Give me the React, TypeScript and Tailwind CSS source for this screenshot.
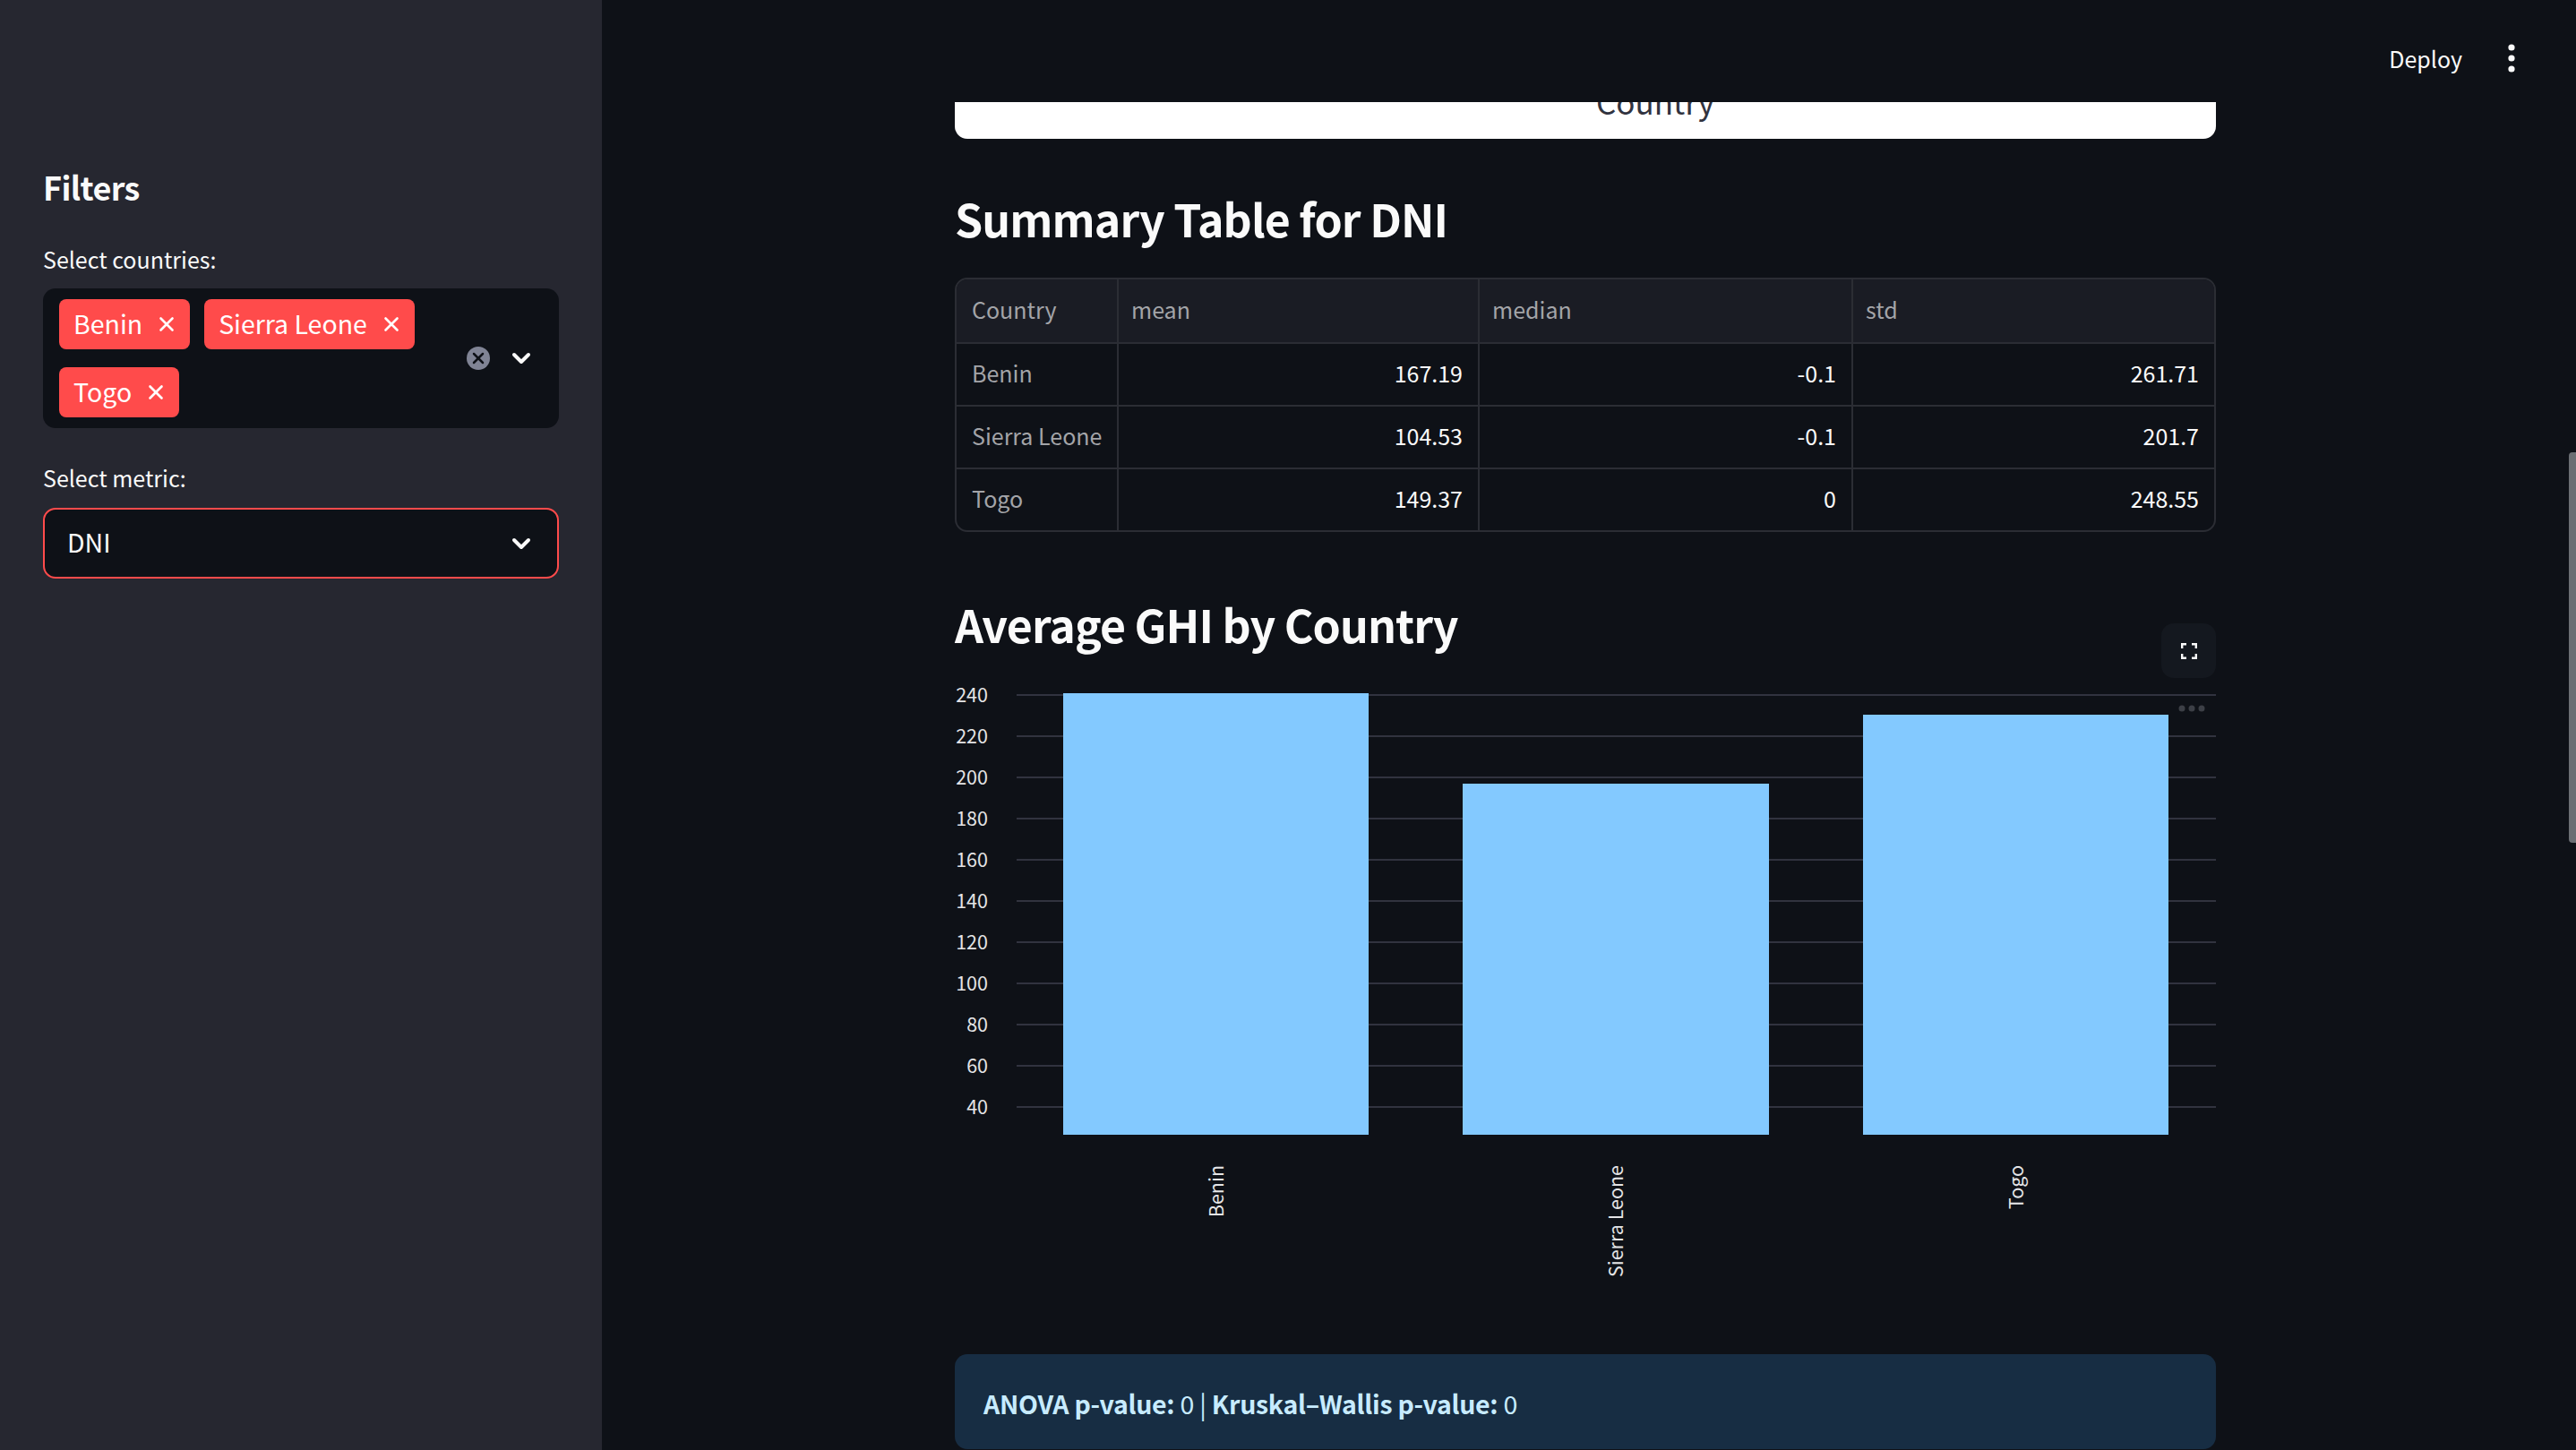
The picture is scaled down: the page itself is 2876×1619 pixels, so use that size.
import React from 'react';
import { ChevronDown, X } from 'lucide-react';

const rows = [
  { country: 'Benin', mean: '167.19', median: '-0.1', std: '261.71' },
  { country: 'Sierra Leone', mean: '104.53', median: '-0.1', std: '201.7' },
  { country: 'Togo', mean: '149.37', median: '0', std: '248.55' },
];

const ticks = [240, 220, 200, 180, 160, 140, 120, 100, 80, 60, 40];

const bars = [
  { name: 'Benin', x: 121, w: 341, top: 42 },
  { name: 'Sierra Leone', x: 567, w: 342, top: 143 },
  { name: 'Togo', x: 1014, w: 341, top: 66 },
];

function Tag({ label }: { label: string }) {
  return (
    <span className="flex h-[56px] items-center rounded-lg bg-[#ff4b4b] pb-[2px] pl-[16px] pr-[13px] text-[28.500px] text-white">
      {label}
      <X size={26} strokeWidth={2.4} className="ml-[14px] mt-[2px]" />
    </span>
  );
}

function Sidebar() {
  return (
    <aside className="h-full w-[672px] shrink-0 bg-[#262730] px-[48px] pt-[184px] text-[#fafafa]">
      <h2 className="text-[36px] font-semibold leading-[48px] tracking-[-0.6px]">Filters</h2>
      <p className="mt-[40px] text-[25px] leading-[34px]">Select countries:</p>
      <div className="mt-[16px] flex h-[156px] items-center rounded-[14px] bg-[#0e1117] pl-[18px] pr-[26px]">
        <div className="flex w-[440px] flex-wrap gap-x-[16px] gap-y-[20px]">
          <Tag label="Benin" />
          <Tag label="Sierra Leone" />
          <Tag label="Togo" />
        </div>
        <div className="ml-auto flex items-center gap-[19px]">
          <span className="flex h-[26px] w-[26px] items-center justify-center rounded-full bg-[#808495] text-[#0e1117]">
            <X size={20} strokeWidth={3} />
          </span>
          <ChevronDown size={32} strokeWidth={3} />
        </div>
      </div>
      <p className="mt-[38px] text-[25px] leading-[34px]">Select metric:</p>
      <div className="mt-[17px] flex h-[79px] items-center rounded-[14px] border-2 border-[#ff4b4b] bg-[#0e1117] pl-[25px] pr-[24px]">
        <span className="pb-[2px] text-[28.500px]">DNI</span>
        <ChevronDown size={32} strokeWidth={3} className="ml-auto" />
      </div>
    </aside>
  );
}

function SummaryTable() {
  const first = 'whitespace-nowrap border-2 border-[#2b2d34] pb-[2px] pl-[17px] pr-0 text-left font-normal text-[#a3a4a8]';
  const head = 'border-2 border-[#2b2d34] pb-[2px] pl-[14px] text-left font-normal text-[#a3a4a8]';
  const num = 'border-2 border-[#2b2d34] pb-[2px] pr-[17px] text-right text-[#fafafa]';
  const numLast = 'border-2 border-[#2b2d34] pb-[2px] pr-[19px] text-right text-[#fafafa]';
  return (
    <div className="mt-[35px] overflow-hidden rounded-[14px] border-2 border-[#2b2d34]">
      <table className="-m-[2px] w-[1408px] table-fixed border-collapse text-[25px]">
        <colgroup>
          <col className="w-[181px]" />
          <col className="w-[403px]" />
          <col className="w-[417px]" />
          <col className="w-[407px]" />
        </colgroup>
        <thead>
          <tr className="h-[72px] bg-[#1a1c24]">
            <th className={first}>Country</th>
            <th className={head}>mean</th>
            <th className={head}>median</th>
            <th className={head}>std</th>
          </tr>
        </thead>
        <tbody>
          {rows.map((r) => (
            <tr key={r.country} className="h-[70px]">
              <td className={first}>{r.country}</td>
              <td className={num}>{r.mean}</td>
              <td className={num}>{r.median}</td>
              <td className={numLast}>{r.std}</td>
            </tr>
          ))}
        </tbody>
      </table>
    </div>
  );
}

function BarChart() {
  return (
    <div className="relative mt-[4px] h-[720px]">
      <button className="absolute right-0 top-[-36px] flex h-[61px] w-[61px] items-center justify-center rounded-[14px] bg-[#14181f] text-[#fafafa]">
        <svg width="18" height="18" viewBox="0 0 18 18" fill="none" stroke="currentColor" strokeWidth="2.4">
          <path d="M1.2 6V1.2H6M12 1.2h4.8V6M16.800 12v4.800H12M6 16.800H1.200V12" />
        </svg>
      </button>
      <svg width="1408" height="720" viewBox="0 0 1408 720" className="block">
        {ticks.map((t, i) => (
          <g key={t}>
            <line x1="69" x2="1408" y1={44 + i * 46} y2={44 + i * 46} stroke="#31333f" strokeWidth="2" />
            <text x="37" y={52 + i * 46} textAnchor="end" fontSize="21.500" fill="#e4e4e6">
              {t}
            </text>
          </g>
        ))}
        {bars.map((b) => (
          <g key={b.name}>
            <rect x={b.x} y={b.top} width={b.w} height={535 - b.top} fill="#83c9ff" />
            <text
              transform={`translate(${b.x + b.w / 2 + 8} 569) rotate(-90)`}
              textAnchor="end"
              fontSize="21.500"
              fill="#e4e4e6"
            >
              {b.name}
            </text>
          </g>
        ))}
        <circle cx="1370" cy="59" r="3.500" fill="#3c3f46" />
        <circle cx="1381" cy="59" r="3.500" fill="#3c3f46" />
        <circle cx="1392" cy="59" r="3.500" fill="#3c3f46" />
      </svg>
    </div>
  );
}

export default function App() {
  return (
    <div className="flex h-[1619px] w-full overflow-hidden bg-[#0e1117] font-['Noto_Sans_CJK_SC','Noto_Sans',sans-serif] text-[#fafafa]">
      <Sidebar />
      <main className="relative flex-1 overflow-hidden">
        <header className="flex h-[114px] items-start justify-end pr-[60px] pt-[44px]">
          <span className="text-[25px] leading-[42px]">Deploy</span>
          <svg width="24" height="42" viewBox="0 0 24 42" className="ml-[43px]" fill="#fafafa">
            <circle cx="12" cy="9" r="3.600" />
            <circle cx="12" cy="21" r="3.600" />
            <circle cx="12" cy="33" r="3.600" />
          </svg>
        </header>

        <div className="ml-[394px] w-[1408px]">
          <div className="h-[41px] overflow-hidden rounded-b-[14px] bg-white text-center">
            <span className="relative -top-[22px] block pl-[156px] text-[35px] leading-[42px] text-[#31333f]">Country</span>
          </div>

          <h3 className="mt-[56px] text-[50px] font-semibold leading-[64px] tracking-[-0.9px]">Summary Table for DNI</h3>
          <SummaryTable />

          <h3 className="mt-[70px] text-[50px] font-semibold leading-[64px] tracking-[-0.9px]">Average GHI by Country</h3>
          <BarChart />

          <div className="mt-[60px] flex h-[106px] items-start rounded-[14px] bg-[#172d43] px-[32px] pt-[37px] text-[28.500px] leading-[36px] tracking-[-0.27px] text-[#c7ebff]">
            <p>
              <strong className="font-semibold">ANOVA p-value:</strong> 0 | <strong className="font-semibold">Kruskal–Wallis p-value:</strong> 0
            </p>
          </div>
        </div>

        <div className="absolute right-0 top-[505px] h-[436px] w-[8px] rounded-l-[4px] bg-[#6b6e73]" />
      </main>
    </div>
  );
}
